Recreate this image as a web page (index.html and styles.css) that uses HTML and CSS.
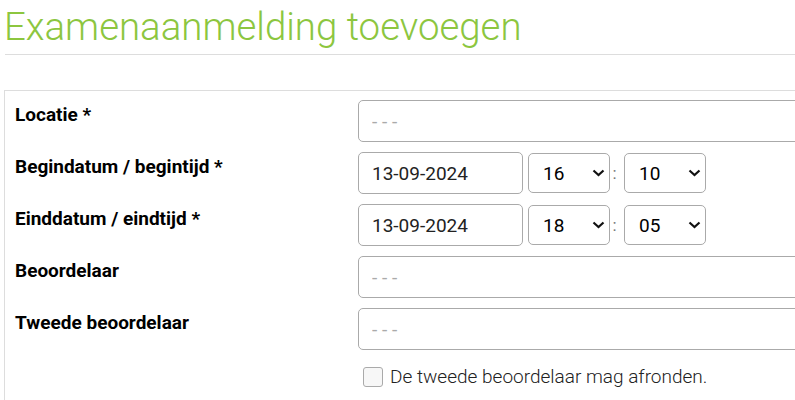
FILE: index.html
```html
<!DOCTYPE html>
<html lang="nl">
<head>
<meta charset="utf-8">
<title>Examenaanmelding toevoegen</title>
<link rel="stylesheet" href="styles.css">
</head>
<body>
<div class="page">
  <h1 class="title">Examenaanmelding toevoegen</h1>
  <hr class="rule">
  <div class="panel">
    <div class="form">
      <label class="lbl">Locatie *</label>
      <div class="ctrl"><input class="field wide" type="text" placeholder="- - -"></div>

      <label class="lbl">Begindatum / begintijd *</label>
      <div class="ctrl">
        <input class="field date" type="text" value="13-09-2024">
        <span class="sel"><select class="field time"><option>16</option></select><svg class="chev" viewBox="0 0 13 8" width="13" height="8"><path d="M1.5 1.5 L6.5 6 L11.5 1.5" fill="none" stroke="#111" stroke-width="2.2"/></svg></span>
        <span class="colon">:</span>
        <span class="sel"><select class="field time"><option>10</option></select><svg class="chev" viewBox="0 0 13 8" width="13" height="8"><path d="M1.5 1.5 L6.5 6 L11.5 1.5" fill="none" stroke="#111" stroke-width="2.2"/></svg></span>
      </div>

      <label class="lbl">Einddatum / eindtijd *</label>
      <div class="ctrl">
        <input class="field date" type="text" value="13-09-2024">
        <span class="sel"><select class="field time"><option>18</option></select><svg class="chev" viewBox="0 0 13 8" width="13" height="8"><path d="M1.5 1.5 L6.5 6 L11.5 1.5" fill="none" stroke="#111" stroke-width="2.2"/></svg></span>
        <span class="colon">:</span>
        <span class="sel"><select class="field time"><option>05</option></select><svg class="chev" viewBox="0 0 13 8" width="13" height="8"><path d="M1.5 1.5 L6.5 6 L11.5 1.5" fill="none" stroke="#111" stroke-width="2.2"/></svg></span>
      </div>

      <label class="lbl">Beoordelaar</label>
      <div class="ctrl"><input class="field wide" type="text" placeholder="- - -"></div>

      <label class="lbl">Tweede beoordelaar</label>
      <div class="ctrl"><input class="field wide" type="text" placeholder="- - -"></div>

      <div class="lbl"></div>
      <label class="check"><input class="box" type="checkbox"><span>De tweede beoordelaar mag afronden.</span></label>
    </div>
  </div>
</div>
</body>
</html>
```

FILE: styles.css
```css
html, body {
  margin: 0;
  padding: 0;
  background: #fff;
  overflow: hidden;
}
body {
  font-family: Roboto, "Liberation Sans", sans-serif;
  color: #222;
}
.page {
  padding-left: 4px;
  width: 1100px;
}
.title {
  margin: 4px 0 0 0;
  font-size: 38.4px;
  font-weight: 300;
  line-height: normal;
  color: #8cc63f;
}
.rule {
  margin: 5px 0 0 1px;
  border: 0;
  border-top: 1px solid #ddd;
  height: 0;
}
.panel {
  margin-top: 35px;
  border: 1px solid #ddd;
  padding: 9px 10px 20px 10px;
}
.form {
  display: grid;
  grid-template-columns: 343px 1fr;
  row-gap: 10px;
}
.lbl {
  font-size: 19px;
  font-weight: 700;
  color: #000;
  padding-top: 4px;
  line-height: 22px;
}
.ctrl {
  display: flex;
  align-items: center;
  height: 42px;
}
.field {
  box-sizing: border-box;
  height: 42px;
  border: 1px solid #aaa;
  border-radius: 5px;
  background: #fff;
  font-family: Roboto, "Liberation Sans", sans-serif;
  font-size: 19px;
  color: #222;
  padding: 0 13px;
  outline: none;
}
.field::placeholder {
  color: #aaa;
}
.wide {
  width: 700px;
}
.date {
  width: 165px;
}
.sel {
  position: relative;
  display: inline-flex;
  margin-left: 5px;
}
.time {
  -webkit-appearance: none;
  appearance: none;
  width: 82px;
  height: 40px;
  padding: 0 14px;
  color: #000;
}
.chev {
  position: absolute;
  right: 5px;
  top: 16px;
  pointer-events: none;
}
.colon {
  width: 9px;
  text-align: center;
  color: #777;
  font-size: 17px;
}
.check {
  display: flex;
  align-items: center;
  gap: 7px;
  margin-top: 5px;
  padding-left: 5px;
  font-size: 19px;
  font-weight: 300;
  color: #222;
}
.box {
  -webkit-appearance: none;
  appearance: none;
  margin: 0;
  width: 20px;
  height: 20px;
  border: 1px solid #aaa;
  border-radius: 3px;
  background: #f7f7f7;
}
```
